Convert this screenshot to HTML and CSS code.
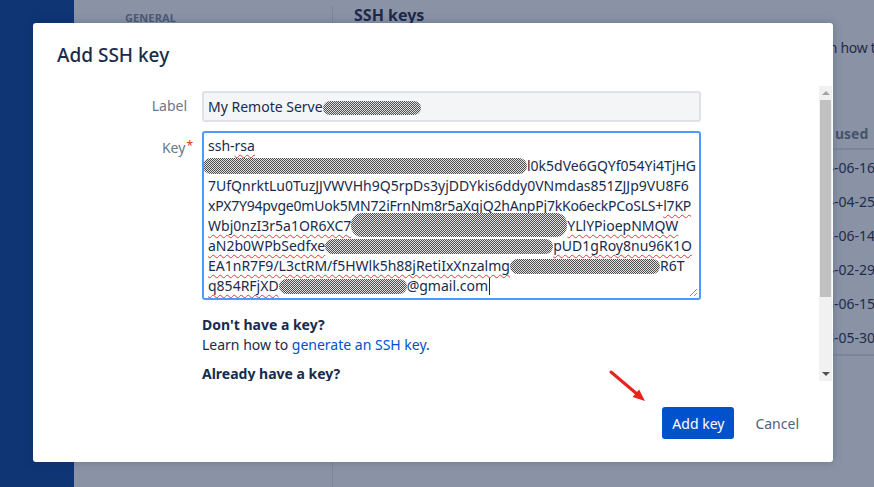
FILE: index.html
```html
<!DOCTYPE html>
<html lang="en">
<head>
  <meta charset="UTF-8">
  <title>Add SSH key</title>
  <link rel="stylesheet" href="styles.css">
</head>
<body>

  <div class="page">
    <div class="sidebar"></div>
    <div class="nav">
      <div class="nav-head">General</div>
    </div>
    <div class="content">
      <h1>SSH keys</h1>
      <p class="intro">Use SSH to avoid password prompts when you push code to Bitbucket. Learn how to generate an SSH key.</p>
      <div class="keys">
        <div class="keys-row keys-head"><span>Label</span><span>Key</span><span>Added</span><span>Last used</span></div>
        <div class="keys-row"><span>laptop</span><span>SHA256:...</span><span>2021-03-02</span><span>2024-06-16</span></div>
        <div class="keys-row"><span>desktop</span><span>SHA256:...</span><span>2021-05-11</span><span>2024-04-25</span></div>
        <div class="keys-row"><span>build</span><span>SHA256:...</span><span>2022-01-09</span><span>2023-06-14</span></div>
        <div class="keys-row"><span>work</span><span>SHA256:...</span><span>2022-08-20</span><span>2024-02-29</span></div>
        <div class="keys-row"><span>server</span><span>SHA256:...</span><span>2022-11-04</span><span>2023-06-15</span></div>
        <div class="keys-row"><span>old</span><span>SHA256:...</span><span>2023-02-17</span><span>2023-05-30</span></div>
      </div>
    </div>
  </div>

  <div class="modal">
    <div class="modal-head">
      <h2>Add SSH key</h2>
    </div>

    <div class="modal-body">
      <div class="form">
        <div class="field">
          <label class="field-label">Label</label>
          <div class="input">My Remote Serve<span class="redact redact-sm"></span></div>
        </div>

        <div class="field field-key">
          <label class="field-label">Key<span class="req">*</span></label>
          <div class="keybox">
            <div class="line">ssh-<span class="sp">rsa</span></div>
            <div class="line"><span class="redact redact-l2"></span>l0k5dVe6GQYf054Yi4TjHG</div>
            <div class="line">7UfQnrktLu0TuzJJVWVHh9Q5rpDs3yjDDYkis6ddy0VNmdas851ZJJp9VU8F6</div>
            <div class="line tight">xPX7Y94pvge0mUok5MN72iFrnNm8r5aXqjQ2hAnpPj7kKo6eckPCoSLS+<span class="sp">l7KP</span></div>
            <div class="line"><span class="sp">Wbj0nzI3r5a1OR6XC7</span><span class="redact redact-l5"></span><span class="sp">YLlYPioepNMQW</span></div>
            <div class="line"><span class="sp">aN2b0WPbSedfxe</span><span class="redact redact-l6"></span><span class="sp">pUD1gRoy8nu96K1O</span></div>
            <div class="line"><span class="sp">EA1nR7F9/L3ctRM/f5HWlk5h88jRetiIxXnzalmg</span><span class="redact redact-l7"></span>R6T</div>
            <div class="line"><span class="sp">q854RFjXD</span><span class="redact redact-l8"></span>@gmail.com<span class="caret"></span></div>
            <svg class="grip" width="9" height="9" viewBox="0 0 9 9">
              <path d="M8 1 L1 8 M8 5 L5 8" stroke="#8a8a8a" stroke-width="1"/>
            </svg>
          </div>
        </div>

        <div class="help">
          <h4>Don't have a key?</h4>
          <p>Learn how to <a href="#">generate an SSH key</a>.</p>
          <h4 class="help-second">Already have a key?</h4>
        </div>
      </div>

      <div class="scrollbar">
        <div class="sb-btn"><span class="sb-up"></span></div>
        <div class="sb-thumb"></div>
        <div class="sb-track"></div>
        <div class="sb-btn"><span class="sb-down"></span></div>
      </div>
    </div>

    <div class="modal-foot">
      <button class="btn-primary">Add key</button>
      <button class="btn-subtle">Cancel</button>
    </div>

    <svg class="pointer" width="40" height="36" viewBox="0 0 40 36">
      <line x1="3" y1="4" x2="29" y2="26" stroke="#e8231b" stroke-width="3" stroke-linecap="round"/>
      <polygon points="37,33 24.6,29 31.1,21.4" fill="#e8231b"/>
    </svg>
  </div>

</body>
</html>
```

FILE: styles.css
```css
body {
  margin: 0;
  font-family: "Noto Sans", "Open Sans", sans-serif;
  background: #8a93a6;
  height: 487px;
  overflow: hidden;
}

/* page behind the dialog, colours already dimmed */
.page {
  display: flex;
  height: 100vh;
}
.sidebar {
  width: 74px;
  background: #0f3574;
}
.nav {
  width: 259px;
  box-sizing: border-box;
  margin-top: 6px;
  padding: 4px 0 0 51px;
  border-right: 1px solid #7d8699;
}
.nav-head {
  font-size: 11px;
  font-weight: 700;
  text-transform: uppercase;
  color: #4e5a73;
  letter-spacing: 0.1px;
}
.content {
  flex: 1;
  min-width: 0;
  padding: 4px 0 0 21px;
  white-space: nowrap;
  overflow: hidden;
}
.content h1 {
  margin: 0;
  font-size: 16px;
  line-height: 22px;
  color: #1c2a4a;
}
.intro {
  margin: 12px 0 0;
  font-size: 14px;
  line-height: 20px;
  letter-spacing: -0.3px;
  color: #1f2c4a;
}
.keys {
  margin-top: 60px;
  border-bottom: 2px solid #7d8699;
}
.keys-row {
  display: grid;
  grid-template-columns: 200px 150px 98px auto;
  height: 34px;
  align-items: center;
  font-size: 14px;
  color: #1f2c4a;
}
.keys-head {
  height: 30px;
  font-weight: 700;
  color: #46536c;
  border-bottom: 2px solid #7d8699;
}

/* dialog */
.modal {
  position: absolute;
  left: 33px;
  top: 23px;
  width: 800px;
  height: 439px;
  background: #fff;
  border-radius: 3px;
  box-shadow: 0 0 8px rgba(9, 30, 66, 0.25);
  display: flex;
  flex-direction: column;
  color: #172b4d;
}
.modal-head {
  height: 63px;
  display: flex;
  align-items: center;
  padding: 0 24px;
}
.modal-head h2 {
  margin: 0;
  font-size: 19px;
  font-weight: 500;
  color: #172b4d;
}
.modal-body {
  display: flex;
  height: 295px;
}
.form {
  flex: 1;
  overflow: hidden;
  padding-top: 5px;
  font-size: 14px;
}
.field {
  display: grid;
  grid-template-columns: 157px 499px;
  column-gap: 12px;
}
.field-key {
  margin-top: 9px;
}
.field-label {
  text-align: right;
  padding: 5px 3px 0 0;
  line-height: 20px;
  color: #6b778c;
}
.req {
  color: #de350b;
  margin-right: -6px;
  margin-left: 1px;
  vertical-align: 3px;
  font-size: 12px;
}
.input {
  height: 31px;
  box-sizing: border-box;
  border: 2px solid #dfe1e6;
  border-radius: 3px;
  background: #f4f5f7;
  padding: 0 4px;
  line-height: 27px;
  white-space: nowrap;
}
.keybox {
  position: relative;
  height: 169px;
  box-sizing: border-box;
  border: 2px solid #4c9aff;
  border-radius: 3px;
  padding: 3px 4px;
  line-height: 20px;
  overflow: hidden;
}
.line {
  height: 20px;
  white-space: nowrap;
}
.tight {
  letter-spacing: -0.2px;
}
.sp {
  text-decoration: underline wavy #e5343a;
  text-decoration-thickness: 1px;
  text-underline-offset: 3px;
}
.caret {
  display: inline-block;
  width: 1px;
  height: 17px;
  background: #172b4d;
  vertical-align: -4px;
  margin-left: 1px;
}
.grip {
  position: absolute;
  right: 1px;
  bottom: 1px;
}

/* scribbled-out parts of the screenshot */
.redact {
  display: inline-block;
  height: 15px;
  border-radius: 8px;
  vertical-align: -3px;
  background-image: repeating-conic-gradient(#4d4d4d 0 25%, #e2e2e2 0 50%);
  background-size: 2px 2px;
}
.redact-sm {
  width: 98px;
  height: 14px;
  border-radius: 7px;
}
.redact-l2 {
  width: 324px;
  height: 16px;
  margin-left: -5px;
}
.redact-l5 {
  width: 216px;
  height: 24px;
  border-radius: 11px;
  vertical-align: top;
  margin-top: -3px;
}
.redact-l6 {
  width: 228px;
}
.redact-l7 {
  width: 150px;
}
.redact-l8 {
  width: 128px;
}

.help {
  padding: 15px 0 0 169px;
  line-height: 20px;
}
.help h4 {
  margin: 0;
  font-size: 14px;
  font-weight: 700;
}
.help p {
  margin: 0;
}
.help a {
  color: #0052cc;
  text-decoration: none;
}
.help-second {
  margin-top: 9px !important;
}

/* classic scrollbar */
.scrollbar {
  width: 13px;
  margin-right: 1px;
  background: #f1f1f1;
  display: flex;
  flex-direction: column;
}
.sb-btn {
  height: 14px;
  display: flex;
  align-items: center;
  justify-content: center;
}
.sb-up {
  border: 4px solid transparent;
  border-top: 0;
  border-bottom: 4px solid #a3a3a3;
}
.sb-down {
  border: 4px solid transparent;
  border-bottom: 0;
  border-top: 4px solid #505050;
}
.sb-thumb {
  height: 197px;
  margin: 0 1px;
  background: #c1c1c1;
}
.sb-track {
  flex: 1;
}

.modal-foot {
  display: flex;
  justify-content: flex-end;
  padding: 26px 24px 0;
}
.modal-foot button {
  height: 32px;
  padding: 0 10px;
  border: none;
  border-radius: 3px;
  font-family: inherit;
  font-size: 14px;
  cursor: pointer;
}
.btn-primary {
  background: #0052cc;
  color: #fff;
}
.btn-subtle {
  background: none;
  color: #505f79;
  margin-left: 11px;
}

.pointer {
  position: absolute;
  left: 575px;
  top: 345px;
}
```
